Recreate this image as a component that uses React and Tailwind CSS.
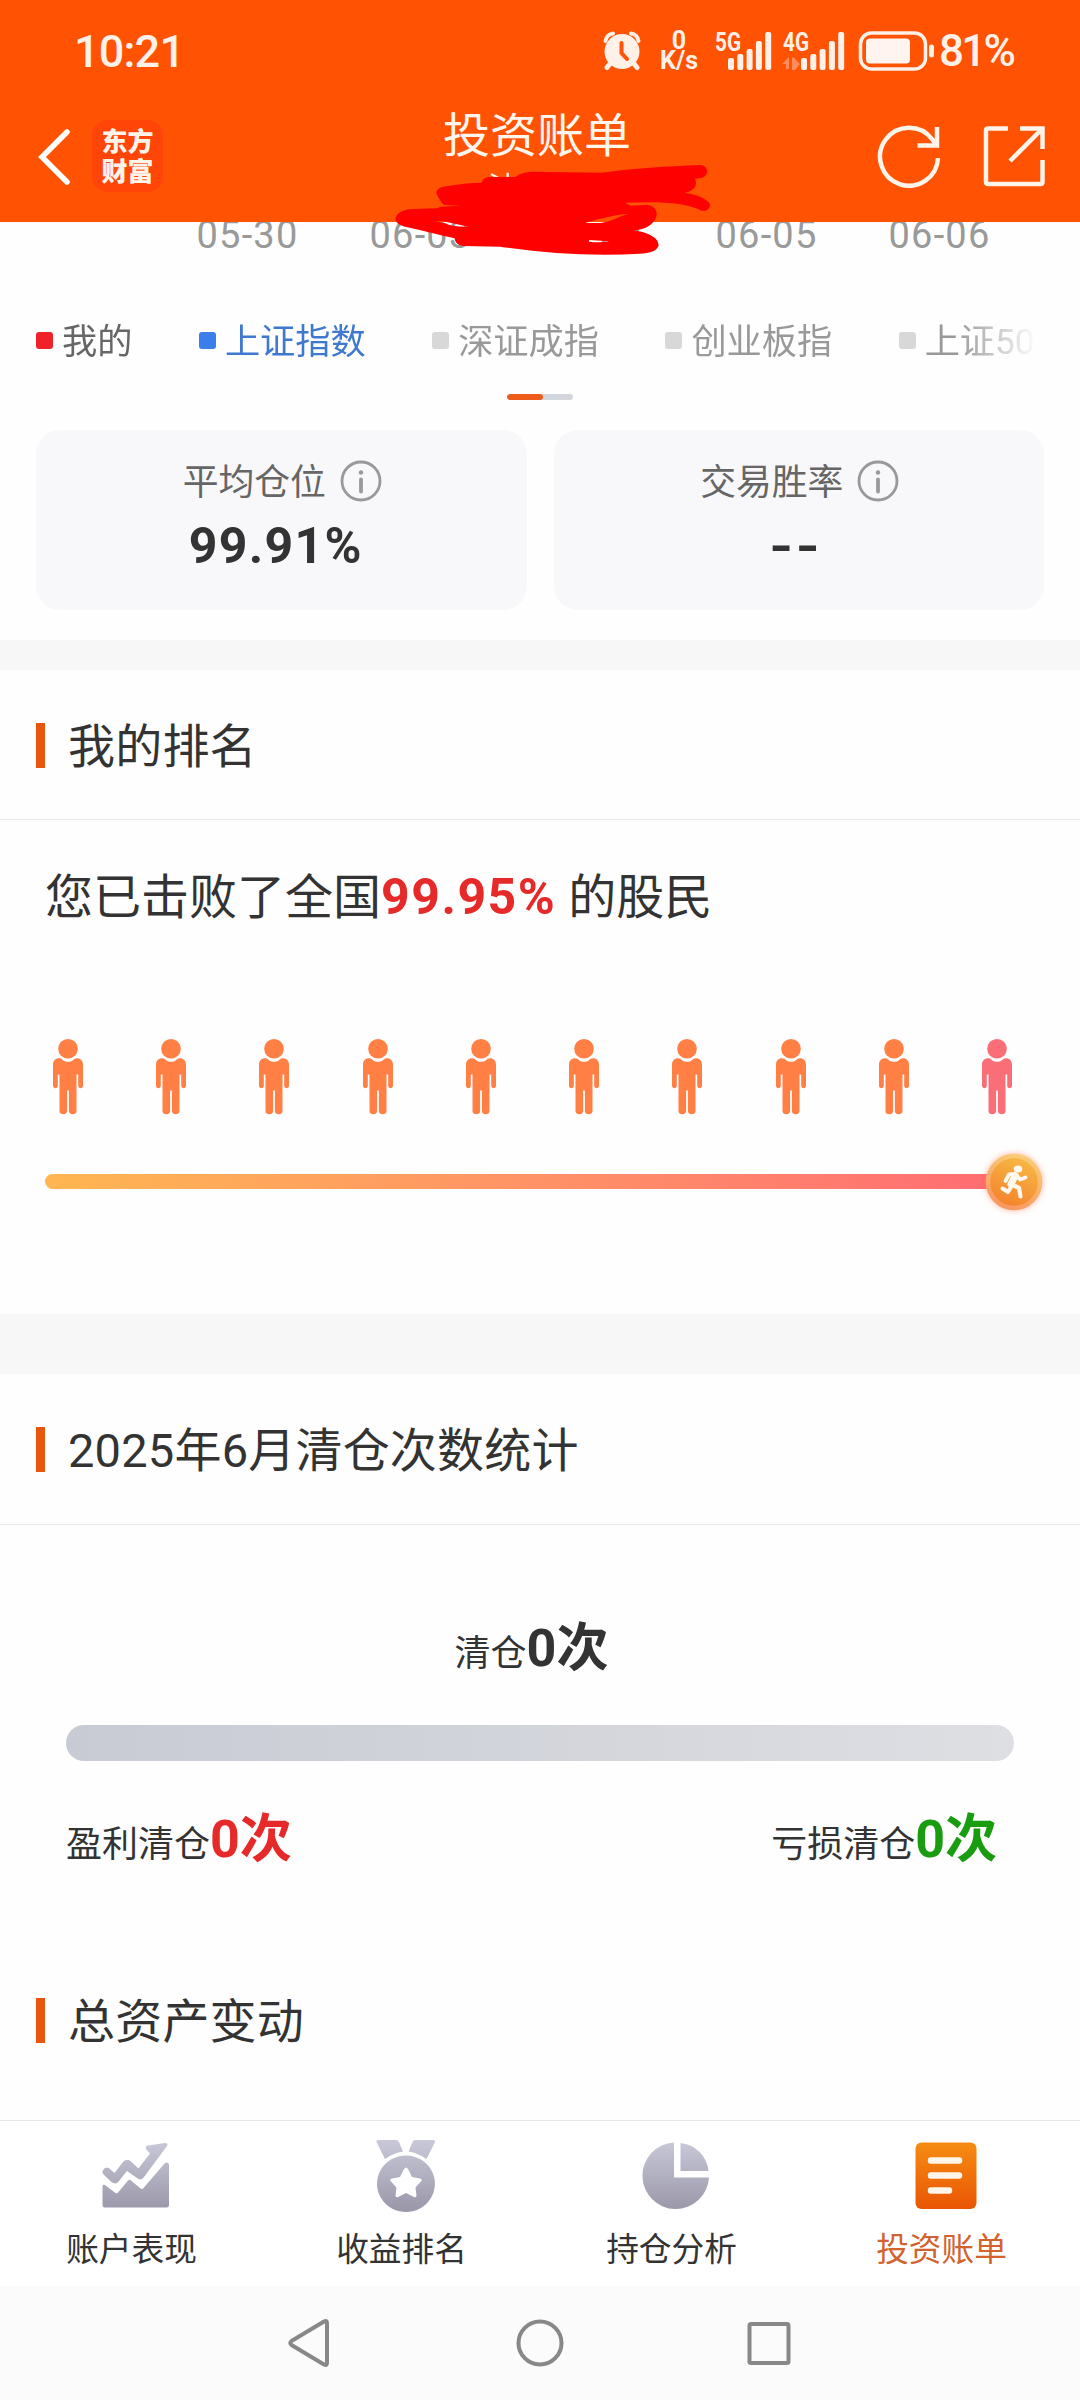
const dates = ['05-30', '06-03', '06-04', '06-05', '06-06']

const legend = [
  { name: '我的', dot: 'bg-[#ee2228]', text: 'text-[#666666]' },
  { name: '上证指数', dot: 'bg-[#3b7deb]', text: 'text-[#3f79cf]' },
  { name: '深证成指', dot: 'bg-[#d8d8d8]', text: 'text-[#999999]' },
  { name: '创业板指', dot: 'bg-[#d8d8d8]', text: 'text-[#999999]' },
  { name: '上证50', dot: 'bg-[#d8d8d8]', text: 'text-[#999999]' },
]

const people = [0, 1, 2, 3, 4, 5, 6, 7, 8, 9]

function Signal({ label, offset, arrows }) {
  return (
    <svg width={offset + 43} height="40" viewBox={'0 0 ' + (offset + 43) + ' 40'} className="shrink-0 overflow-visible">
      <text x="0" y="19.5" fontSize="26" fontWeight="700" fill="#fff0e8" textLength="26" lengthAdjust="spacingAndGlyphs">{label}</text>
      {arrows && (
        <path d="M-1 33L6 26V38H3V33ZM9 27Q11 25 12 28L17 33L12 39H9Z" fill="#ff8d5c" />
      )}
      <g fill="#fff0e8" transform={'translate(' + offset + ' 0)'}>
        <rect x="0" y="27" width="6" height="12" rx="2" />
        <rect x="9.3" y="23" width="6" height="16" rx="2" />
        <rect x="18.6" y="18" width="6" height="21" rx="2" />
        <rect x="27.9" y="10" width="6" height="29" rx="2" />
        <rect x="37.2" y="1" width="6" height="38" rx="2" />
      </g>
    </svg>
  )
}

function StatusBar() {
  return (
    <div className="flex h-[102px] items-center text-[#fff0e8]">
      <span className="ml-[74px] w-[529px] text-[45px] font-medium leading-none tracking-[-0.8px]">10:21</span>
      <svg width="38" height="40" viewBox="0 0 38 40" className="shrink-0">
        <g fill="none" stroke="#fff0e8" strokeLinecap="round">
          <path d="M2.500 10C3 6 6 3 10 2.500M35.500 10C35 6 32 3 28 2.500" strokeWidth="4" />
          <path d="M7.500 32L4 36.500M30.500 32L34 36.500" strokeWidth="5" />
        </g>
        <circle cx="19" cy="20.500" r="17.500" fill="#fff0e8" />
        <path d="M18.500 12V22L24 28" fill="none" stroke="#ff5202" strokeWidth="4" strokeLinecap="round" />
      </svg>
      <div className="ml-[17px] flex w-[42px] shrink-0 flex-col items-center text-[25px] font-bold leading-[20px]">
        <span>0</span>
        <span>K/s</span>
      </div>
      <div className="ml-[15px] flex shrink-0 gap-[12px]">
        <Signal label="5G" offset={13} />
        <Signal label="4G" offset={18} arrows />
      </div>
      <svg width="78" height="40" viewBox="0 0 78 40" className="ml-[14px] shrink-0">
        <rect x="2.500" y="2" width="65" height="36" rx="11" fill="none" stroke="#fff0e8" strokeWidth="3.500" />
        <rect x="8" y="7.500" width="44" height="25" rx="4" fill="#fff4f0" />
        <rect x="71" y="13.500" width="5" height="13" rx="2.500" fill="#fff0e8" />
      </svg>
      <span className="ml-[3px] text-[44px] font-medium leading-none tracking-[-2.8px]">81%</span>
    </div>
  )
}

// red marker drawn over the account name
function Scribble() {
  return (
    <svg width="350" height="170" viewBox="0 0 1050 510" className="absolute left-[380px] top-[100px] z-10">
      <path d="M333 222L355 234M383 218V234" stroke="#fff0e8" strokeWidth="7" />
      <path
        fill="#ff0000"
        fillRule="evenodd"
        d="M169 278C170 264 190 259 205 258C238 251 270 249 305 248C308 236 318 231 332 231L407 231C420 219 440 215 460 215L665 218C760 205 860 199 962 195C987 198 989 229 962 234L945 236C955 258 940 273 913 279C950 283 977 295 990 311C992 326 980 334 965 332C915 306 840 304 735 308L752 317L800 314C827 318 834 335 828 353C818 375 795 388 763 391C800 397 836 411 836 437C828 455 808 459 780 461C640 470 500 460 360 440L250 438C232 436 225 427 224 415C174 404 125 390 75 380C50 374 44 362 48 350C57 334 74 328 100 327L172 325L182 320L240 317L195 315C182 311 182 298 175 293ZM165 363L190 364L265 380C230 381 210 377 196 370ZM616 369C660 355 700 345 745 341C715 350 690 366 660 369ZM627 420L687 424C665 428 645 427 627 425Z"
      />
    </svg>
  )
}

function Header() {
  return (
    <header className="h-[222px] bg-[#ff5202]">
      <StatusBar />
      <div className="flex h-[108px] items-center">
        <svg width="32" height="56" viewBox="0 0 32 56" className="ml-[38px] mt-[2px]">
          <path d="M29 3L4 28L29 53" fill="none" stroke="#fff" strokeWidth="5.500" strokeLinecap="round" />
        </svg>
        <div className="ml-[22px] flex h-[72px] w-[71px] flex-col items-center justify-center rounded-[15px] bg-[#ff4507] pt-[2px] text-[26px] font-black leading-[30px] text-[#fff4ea]">
          <span>东方</span>
          <span>财富</span>
        </div>
        <h1 className="ml-[280px] h-[92px] w-[190px] text-[47px] leading-[52px] text-[#fff6ee]">投资账单</h1>
        <svg width="64" height="64" viewBox="0 0 64 64" fill="none" stroke="#fff4ea" strokeWidth="4.500" className="ml-[244px]">
          <path d="M61 34A29 29 0 1 1 55 15L60 22" />
          <path d="M60 3V21.500H40.500" />
        </svg>
        <svg width="64" height="64" viewBox="0 0 64 64" fill="none" stroke="#fff4ea" strokeWidth="4.500" className="ml-[41px]">
          <path d="M26 4.500H6Q4 4.500 4 6.500V57.500Q4 60 6 60H58.500Q60.500 60 60.500 58V36" />
          <path d="M38 4.500H60.500V25M60.500 4.500L28 37" />
        </svg>
      </div>
    </header>
  )
}

function InfoIcon() {
  return (
    <svg width="42" height="42" viewBox="0 0 42 42">
      <circle cx="21" cy="21" r="19" fill="none" stroke="#999999" strokeWidth="2.800" />
      <circle cx="21" cy="12.500" r="2.200" fill="#999999" />
      <path d="M21 19.500V31.500" stroke="#999999" strokeWidth="3.800" strokeLinecap="round" />
    </svg>
  )
}

function StatCard({ label, children }) {
  return (
    <div className="flex h-[180px] flex-1 flex-col items-center rounded-[24px] bg-[#f8f8fb] pt-[30px]">
      <div className="ml-[2px] flex h-[42px] items-center gap-[14px] text-[35.8px] text-[#666666]">
        <span className="pt-[3px] leading-[42px]">{label}</span>
        <InfoIcon />
      </div>
      <div className="mt-[14px] flex h-[60px] items-center pr-[11px] text-[50px] font-bold leading-[60px] tracking-[1.3px] text-[#333333]">{children}</div>
    </div>
  )
}

function SectionTitle({ children }) {
  return (
    <div className="flex items-center">
      <span className="ml-[36px] h-[45px] w-[9px] bg-[#e8560c]" />
      <h2 className="ml-[23px] pt-[3px] text-[47px] leading-[57px] tracking-[0.2px] text-[#333333]">{children}</h2>
    </div>
  )
}

function Person({ last }) {
  return (
    <svg width="30" height="76" viewBox="0 0 30 76" className={last ? 'text-[#fa6e78]' : 'text-[#ff7f45]'} fill="currentColor">
      <circle cx="15" cy="9.800" r="9.800" />
      <path d="M6 19.300C8 19.300 9 20.200 10 21.200C13 23.200 17 23.200 20 21.200C21 20.200 22 19.300 24 19.300C27.500 19.300 30 22 30 25.500V46.500C30 50 25.200 50 25.200 46.500V35.500H23.500V72C23.500 76.300 15.900 76.300 15.900 72V51.500H14.100V72C14.100 76.300 6.500 76.300 6.500 72V35.500H4.800V46.500C4.800 50 0 50 0 46.500V25.500C0 22 2.500 19.300 6 19.300Z" />
    </svg>
  )
}

function Runner() {
  return (
    <svg width="64" height="64" viewBox="0 0 64 64" className="absolute -top-[24px] right-0 drop-shadow-[0_0_3px_rgba(255,110,60,0.5)]">
      <defs>
        <linearGradient id="coin" x1="0.7" y1="0" x2="0.3" y2="1">
          <stop offset="0" stopColor="#f6b945" />
          <stop offset="1" stopColor="#f5822c" />
        </linearGradient>
        <linearGradient id="rim" x1="0.7" y1="0" x2="0.3" y2="1">
          <stop offset="0" stopColor="#f9cf78" />
          <stop offset="1" stopColor="#fa9460" />
        </linearGradient>
      </defs>
      <circle cx="32" cy="32" r="28.300" fill="url(#rim)" />
      <circle cx="32" cy="32" r="23.800" fill="url(#coin)" />
      <g stroke="#fff8ee" fill="none" strokeLinecap="round" strokeLinejoin="round">
        <path d="M23.500 31L27 24.500L33.500 24L38 29.500L43.500 27.500" strokeWidth="3.800" />
        <path d="M33 26L29 34" strokeWidth="7" />
        <path d="M29.500 36L26 42L20.500 38.500" strokeWidth="4" />
        <path d="M31 35L37 38L38.500 46.500" strokeWidth="4.200" />
      </g>
      <ellipse cx="36" cy="19" rx="4.300" ry="3.500" fill="#fff8ee" />
    </svg>
  )
}

function Count({ label, color }) {
  return (
    <p className="h-[60px] text-[36px] leading-[60px] text-[#333333]">
      {label}
      <span className={'text-[52px] font-bold ' + color}>0次</span>
    </p>
  )
}

function TabBar() {
  return (
    <nav className="grid h-[166px] grid-cols-4 border-t border-[#e8e8e8] bg-white text-[32.7px] text-[#333333]">
      <div className="flex flex-col items-center pt-[16px]">
        <svg width="68" height="76" viewBox="0 0 68 76" fill="url(#gray)" className="ml-[1px]">
          <defs>
            <linearGradient id="gray" gradientUnits="userSpaceOnUse" x1="0" y1="4" x2="0" y2="72">
              <stop offset="0" stopColor="#c8c8d8" />
              <stop offset="1" stopColor="#9b99a9" />
            </linearGradient>
          </defs>
          <path d="M2 32C4 30 7 31 8 32L12.500 36L21 25C23 22.500 27 22.500 29 24.500L36.500 31.500L48 16.500L44 12C43 10 44 9 46 8.500L63 6C65.500 6 66 7 65 9L42 40C40 43 37.500 43 35 41L25 34L17 44C15 47 12 47 9.500 45L2 38C0 36 0 34 2 32Z" />
          <path d="M0.500 49Q1 47 3 48L13.500 56Q15 57 16.500 55L26 43.500Q27.500 42 29 43.500L38 51Q40 53 41.500 51L63 26Q65 24.500 67 27V68Q67 70.500 64.500 70.500H3Q0.500 70.500 0.500 68Z" />
        </svg>
        <span className="mr-[7px] mt-[15px] leading-[44px]">账户表现</span>
      </div>
      <div className="flex flex-col items-center pt-[16px]">
        <svg width="60" height="76" viewBox="0 0 60 76" fill="url(#gray)" className="ml-[2px]">
          <path d="M3 3H20Q22 3 23 5L27 14.500Q17 16 9 22L0.500 5Q0 3 3 3ZM57 3H39.500Q37.500 3 36.500 5L32.500 14.500Q42 16 50.500 22L59 5Q59.500 3 57 3Z" />
          <path fillRule="evenodd" d="M30 18.500A29 28.200 0 1 1 29.900 18.500ZM28 32L24 40L16 41.500Q13 42.500 15 44.500L20.500 50.500L19.500 58.500Q19.500 61 22 60L30 56L38 60Q40.500 61 40.500 58.500L39.500 50.500L45 44.500Q47 42.500 44 41.500L36 40L32 32Q30 29 28 32Z" />
        </svg>
        <span className="mr-[7px] mt-[15px] leading-[44px]">收益排名</span>
      </div>
      <div className="flex flex-col items-center pt-[16px]">
        <svg width="68" height="76" viewBox="0 0 68 76" fill="url(#gray)" className="ml-[1px]">
          <path d="M32 5.500V40.500H67A33.300 33.300 0 1 1 32 5.500Z" />
          <path d="M38.500 6V34H66.500A31 31 0 0 0 38.500 6Z" />
        </svg>
        <span className="mr-[7px] mt-[15px] leading-[44px]">持仓分析</span>
      </div>
      <div className="flex flex-col items-center pt-[16px] text-[#d2622e]">
        <svg width="62" height="76" viewBox="0 0 62 76" className="ml-[1px]">
          <defs>
            <linearGradient id="bill" x1="0" y1="0" x2="0" y2="1">
              <stop offset="0" stopColor="#f58c12" />
              <stop offset="1" stopColor="#ea5504" />
            </linearGradient>
          </defs>
          <rect x="0.500" y="5.500" width="61" height="66.500" rx="6" fill="url(#bill)" />
          <path d="M16 23.500H44M16 38.500H44M16 53.500H34" stroke="#fff6ea" strokeWidth="6.500" strokeLinecap="round" />
        </svg>
        <span className="mr-[7px] mt-[15px] leading-[44px]">投资账单</span>
      </div>
    </nav>
  )
}

export default function App() {
  return (
    <div className="relative flex h-[2400px] w-[1080px] flex-col overflow-hidden bg-[#fefefe] font-[Roboto,'Noto_Sans_CJK_SC',sans-serif]">
      <Header />
      <Scribble />

      <main className="h-[1898px] overflow-hidden">
        <div className="grid h-[58px] grid-cols-[repeat(5,173px)] overflow-hidden pl-[161px] text-center text-[38px] leading-[26px] tracking-[1.2px] text-[#999999]">
          {dates.map((d) => (
            <span key={d}>{d}</span>
          ))}
        </div>

        <div className="ml-[36px] mt-[30px] flex h-[60px] w-[1001px] items-center gap-[66.500px] overflow-hidden whitespace-nowrap [mask-image:linear-gradient(to_right,black_92%,transparent)]">
          {legend.map((item) => (
            <div key={item.name} className="flex shrink-0 items-center">
              <span className={'h-[17px] w-[17px] rounded-[3px] ' + item.dot} />
              <span className={'ml-[9px] pt-[4px] text-[35.2px] leading-[60px] ' + item.text}>{item.name}</span>
            </div>
          ))}
        </div>
        <div className="mx-auto mt-[24px] h-[6px] w-[66px] overflow-hidden rounded-full bg-[#d4d6de]">
          <div className="h-full w-[36px] rounded-full bg-[#ee5c1c]" />
        </div>

        <div className="mx-[36px] mt-[30px] flex gap-[27px]">
          <StatCard label="平均仓位">99.91%</StatCard>
          <StatCard label="交易胜率">
            <span className="ml-[5px] mt-[2px] scale-x-[1.22] tracking-[2px]">--</span>
          </StatCard>
        </div>

        <div className="mt-[30px] h-[30px] bg-[#f7f7f7]" />

        <section className="h-[644px] pt-[45px]">
          <SectionTitle>我的排名</SectionTitle>
          <div className="mt-[44px] border-t border-[#e8e8e8]" />
          <p className="ml-[45px] mt-[47px] h-[60px] whitespace-pre text-[48px] leading-[60px] text-[#333333]">
            您已击败了全国<span className="text-[50px] font-bold tracking-[1.5px] text-[#e62a2a]">99.95%</span> 的股民
          </p>
          <div className="ml-[53px] mr-[68px] mt-[112px] flex justify-between">
            {people.map((n) => (
              <Person key={n} last={n === 9} />
            ))}
          </div>
          <div className="relative ml-[45px] mr-[34px] mt-[59px] h-[15px] pr-[32px]">
            <div className="h-full rounded-full bg-linear-to-r from-[#ffb651] to-[#ff6b73]" />
            <Runner />
          </div>
        </section>

        <div className="h-[60px] bg-[#f7f7f7]" />

        <section className="pt-[45px]">
          <SectionTitle>2025年6月清仓次数统计</SectionTitle>
          <div className="mt-[45px] border-t border-[#e8e8e8]" />
          <div className="mt-[94px] flex justify-center pr-[17px]">
            <Count label="清仓" color="text-[#333333]" />
          </div>
          <div className="mx-[66px] mt-[46px] h-[36px] rounded-full bg-linear-to-r from-[#c8cbd4] to-[#dedfe3]" />
          <div className="ml-[66px] mr-[83px] mt-[49px] flex justify-between">
            <Count label="盈利清仓" color="text-[#e62a2a]" />
            <Count label="亏损清仓" color="text-[#1a9c10]" />
          </div>
          <div className="mt-[120px]">
            <SectionTitle>总资产变动</SectionTitle>
          </div>
        </section>
      </main>

      <TabBar />

      <div className="h-[114px] bg-[#fbfbfb] px-[286px] pt-[31px]">
        <svg width="508" height="52" viewBox="0 0 508 52" fill="none" stroke="#888888" strokeWidth="4" strokeLinejoin="round">
          <path d="M38 4.500Q41 3 41 6V46Q41 49 38 47.500L5.500 28Q3 26 5.500 24Z" />
          <circle cx="254" cy="26" r="21.500" />
          <rect x="463.500" y="7" width="39" height="39" rx="1.500" />
        </svg>
      </div>
    </div>
  )
}
